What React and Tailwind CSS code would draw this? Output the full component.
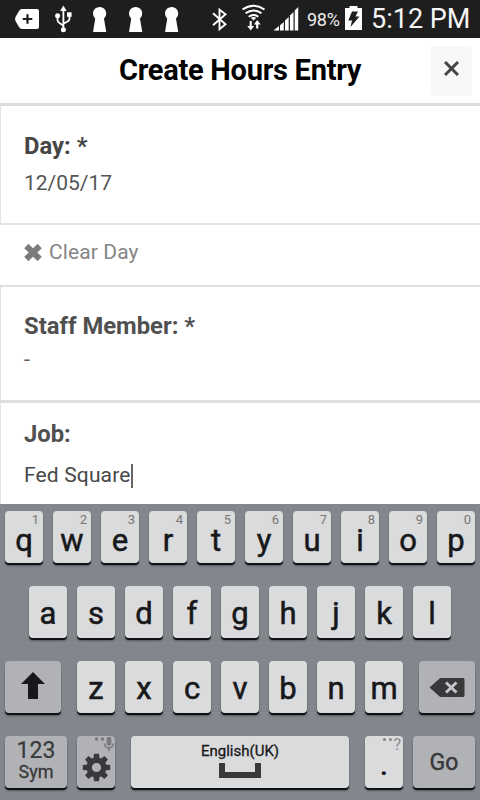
import React from "react";

function StatusBar() {
  return (
    <header className="flex h-[38px] shrink-0 items-start bg-[#1e1e1e] text-white">
      <svg className="ml-[15px] h-[38px] w-[24px]" viewBox="15 0 24 38">
        <path d="M22 9H37Q39 9 39 11V27Q39 29 37 29H22Q20 29 19 27L15.5 21Q14.8 19 15.5 17L19 11Q20 9 22 9Z" fill="white" />
        <path d="M27.5 14.2V23.8M22.7 19H32.3" stroke="#1e1e1e" strokeWidth="2.2" />
      </svg>
      <svg className="ml-[16px] h-[38px] w-[18px]" viewBox="55 0 18 38" fill="none" stroke="white" strokeWidth="1.8">
        <path d="M63.4 10V29M57.5 16V20Q57.5 22 59.5 23L63 25.5M69.5 15V18.5Q69.5 20.5 67.5 21.5L63.8 23.5" />
        <path d="M63.4 5.5L66.7 11H60.1Z" fill="white" stroke="none" />
        <circle cx="57.6" cy="15.8" r="2.5" fill="white" stroke="none" />
        <circle cx="63.4" cy="29.7" r="2.5" fill="white" stroke="none" />
        <path d="M67 12.3H71.6V16.8H67Z" fill="white" stroke="none" />
      </svg>
      <div className="ml-[20px] flex gap-[22px]">
        {[0, 1, 2].map((n) => (
          <svg key={n} className="h-[38px] w-[14px]" viewBox="0 0 14 38" fill="white">
            <circle cx="6.6" cy="13.5" r="6.6" />
            <path d="M2.6 17H10.6L11.2 20L13.3 32H0L2 20Z" />
          </svg>
        ))}
      </div>
      <svg className="ml-[33px] h-[38px] w-[16px]" viewBox="212 0 16 38" fill="none" stroke="white" strokeWidth="1.9">
        <path d="M213 13.3L225.5 24.2L219.5 29.3V9.7L225.5 14.3L213 25.3" />
      </svg>
      <svg className="ml-[13px] h-[38px] w-[25px]" viewBox="241 0 25 38" fill="none" stroke="white" strokeWidth="2">
        <path d="M242.5 9.5Q253.5 1.8 264.5 9.5M245.5 13.3Q253.5 7.5 261.5 13.3M248.7 16.8Q253.5 13.1 258.3 16.8" />
        <path d="M250.8 17.8Q253.5 16 256.2 17.8L253.5 20.5Z" fill="white" stroke="none" />
        <path d="M250.7 21V27M257.2 28.5V23" strokeWidth="2.1" />
        <path d="M247.3 26H254.1L250.7 30.5ZM253.9 24.5H260.7L257.2 20Z" fill="white" stroke="none" />
      </svg>
      <svg className="ml-[7px] h-[38px] w-[26px]" viewBox="273 0 26 38" fill="white">
        <path d="M273.5 30.5L279 26V30.5ZM280 25.2L283.8 22V30.5H280ZM285 20.5L288.7 17V30.5H285ZM289.9 15.5L293.5 12V30.5H289.9ZM294.7 10.5L298.2 7V30.5H294.7Z" />
      </svg>
      <span className="ml-[8px] mt-[8px] w-[38px] whitespace-nowrap text-[18px] leading-[24px] tracking-[-0.3px] text-[#eeeeee]">98%</span>
      <svg className="h-[38px] w-[17px]" viewBox="345 0 17 38">
        <path d="M345 8H349.5V6H357.5V8H362V30H345Z" fill="white" />
        <path d="M352 11.5H358L355.5 16.5H359.5L350.5 27L352 20.5H348.3Z" fill="#1e1e1e" />
      </svg>
      <span className="ml-[9px] mt-[2px] whitespace-nowrap text-[27px] leading-[34px] text-[#f5f5f5]">5:12 PM</span>
    </header>
  );
}

function TitleBar() {
  return (
    <div className="flex h-[68px] shrink-0 border-b-[3px] border-[#dcdcdc] bg-white">
      <h1 className="ml-[119px] mt-[16px] w-[312px] whitespace-nowrap text-[29px] font-bold leading-[32px] tracking-[-0.26px] text-black">
        Create Hours Entry
      </h1>
      <button className="mt-[8px] flex h-[50px] w-[41px] justify-center rounded-[4px] bg-[#f7f7f7]">
        <svg className="mt-[15px] h-[15px] w-[15px]" viewBox="0 0 15 15" fill="none" stroke="#444" strokeWidth="3">
          <path d="M1 1L14 14M14 1L1 14" />
        </svg>
      </button>
    </div>
  );
}

function Form() {
  return (
    <main className="flex h-[398px] shrink-0 flex-col bg-white text-[21px] text-[#565656]">
      <section className="h-[119px] border-b-2 border-l border-[#e4e4e4] pl-[23px] pt-[26px]">
        <h2 className="h-[37px] text-[23.8px] font-bold leading-[28px] text-[#464646]">Day: *</h2>
        <p className="leading-[28px]">12/05/17</p>
      </section>
      <div className="flex h-[60px] pl-[24px] pt-[13px] text-[#858585]">
        <svg className="mt-[6px] h-[17px] w-[18px]" viewBox="0 0 18 17" fill="none" stroke="#7b7b7b" strokeWidth="6">
          <path d="M2.3 2L15.7 15M15.7 2L2.3 15" />
        </svg>
        <span className="ml-[7px] leading-[28px] tracking-[0.1px]">Clear Day</span>
      </div>
      <section className="h-[118px] border-b-[3px] border-l border-t-2 border-[#dfdfdf] pl-[23px] pt-[25px]">
        <h2 className="h-[33px] text-[23.8px] font-bold leading-[28px] text-[#505050]">Staff Member: *</h2>
        <p className="leading-[28px]">-</p>
      </section>
      <section className="grow border-l border-[#e4e4e4] pl-[23px] pt-[17px]">
        <h2 className="h-[41px] text-[23.8px] font-bold leading-[28px] text-[#505050]">Job:</h2>
        <div className="flex text-[#484848]">
          <span className="leading-[28px] tracking-[0.15px]">Fed Square</span>
          <span className="mt-[3px] h-[24px] w-[2px] bg-[#666]" />
        </div>
      </section>
    </main>
  );
}

const face = "relative flex h-[52px] shrink-0 justify-center rounded-[4px] shadow-[0_2px_0_#101114,0_3px_2px_#55575d]";

function Letter({ char, hint }) {
  return (
    <button className={`${face} w-[38px] bg-[#dadbdd]`}>
      {hint && <span className="absolute right-[4px] top-[2px] text-[13px] leading-[13px] text-[#777]">{hint}</span>}
      <span className={`${hint ? "mt-[17px]" : "mt-[15px]"} text-[31px] leading-[26px] [-webkit-text-stroke:0.55px_#17181a]`}>{char}</span>
    </button>
  );
}

function Keyboard() {
  return (
    <div className="flex h-[296px] shrink-0 flex-col gap-[23px] bg-[#84868d] pl-[5px] pt-[7px] text-[#17181a]">
      <div className="flex gap-[10px]">
        {"qwertyuiop".split("").map((c, i) => (
          <Letter key={c} char={c} hint={String((i + 1) % 10)} />
        ))}
      </div>
      <div className="flex gap-[10px] pl-[24px]">
        {"asdfghjkl".split("").map((c) => (
          <Letter key={c} char={c} />
        ))}
      </div>
      <div className="flex gap-[16px]">
        <button className={`${face} w-[56px] bg-[#b1b2b6]`}>
          <svg className="mt-[11px] h-[27px] w-[24px]" viewBox="0 0 24 27" fill="#17181a">
            <path d="M12 0L24 12H17V27H7V12H0Z" />
          </svg>
        </button>
        <div className="flex gap-[10px]">
          {"zxcvbnm".split("").map((c) => (
            <Letter key={c} char={c} />
          ))}
        </div>
        <button className={`${face} w-[56px] bg-[#b1b2b6]`}>
          <svg className="mt-[17px] h-[19px] w-[36px]" viewBox="0 0 36 19">
            <path d="M0.5 9.5L10 1Q11 0 12 0H34Q35.5 0 35.5 1.5V17.5Q35.5 19 34 19H12Q11 19 10 18Z" fill="#38393b" />
            <path d="M17 4.5L27.5 14.5M27.5 4.5L17 14.5" stroke="#c4c5c8" strokeWidth="3" />
          </svg>
        </button>
      </div>
      <div className="flex">
        <button className={`${face} w-[62px] flex-col items-center bg-[#b1b2b6] text-[#38393b]`}>
          <span className="mt-[3px] h-[23px] text-[23px] leading-[23px] [-webkit-text-stroke:0.2px_#38393b]">123</span>
          <span className="h-[26px] text-[18px] leading-[20px] [-webkit-text-stroke:0.3px_#38393b]">Sym</span>
        </button>
        <button className={`${face} ml-[10px] w-[38px] bg-[#b1b2b6]`}>
          <svg className="h-[52px] w-[38px]" viewBox="0 0 38 52">
            <g fill="#38393b">
              {[0, 45, 90, 135, 180, 225, 270, 315].map((a) => (
                <path key={a} d="M17 17.8H22L22.6 23H16.4Z" transform={`rotate(${a} 19.5 31.5)`} />
              ))}
            </g>
            <circle cx="19.5" cy="31.5" r="7.3" fill="none" stroke="#38393b" strokeWidth="5.4" />
            <g fill="#77787c">
              <circle cx="19.5" cy="3" r="1.7" />
              <circle cx="25.5" cy="3" r="1.7" />
              <rect x="29.7" y="1" width="4.6" height="8.5" rx="1.5" />
            </g>
            <path d="M27.5 7.5Q28 11.8 32 11.8Q36 11.8 36.5 7.5M32 11.8V15" fill="none" stroke="#77787c" strokeWidth="1.5" />
          </svg>
        </button>
        <button className={`${face} ml-[16px] w-[218px] flex-col items-center bg-[#dadbdd]`}>
          <span className="mt-[5px] h-[22px] text-[15px] leading-[20px] [-webkit-text-stroke:0.3px_#17181a]">English(UK)</span>
          <svg className="h-[25px] w-[42px]" viewBox="0 0 42 25">
            <path d="M3 0V12H39V0" fill="none" stroke="#38393b" strokeWidth="6" />
          </svg>
        </button>
        <button className={`${face} ml-[16px] w-[38px] bg-[#dadbdd]`}>
          <span className="absolute right-[2px] top-[-1px] text-[16px] leading-[19px] text-[#8b8c8e]">?</span>
          <span className="absolute right-[11px] top-[2px] flex gap-[3px]">
            <i className="size-[3px] rounded-full bg-[#858688]" />
            <i className="size-[3px] rounded-full bg-[#858688]" />
          </span>
          <span className="mt-[11px] text-[30px] font-medium leading-[36px]">.</span>
        </button>
        <button className={`${face} ml-[10px] w-[62px] bg-[#b1b2b6] text-[#38393b]`}>
          <span className="mt-[13px] text-[23px] leading-[28px] [-webkit-text-stroke:0.45px_#38393b]">Go</span>
        </button>
      </div>
    </div>
  );
}

export default function App() {
  return (
    <div className="flex h-[800px] w-[480px] flex-col overflow-hidden font-['Roboto',sans-serif]">
      <StatusBar />
      <TitleBar />
      <Form />
      <Keyboard />
    </div>
  );
}
